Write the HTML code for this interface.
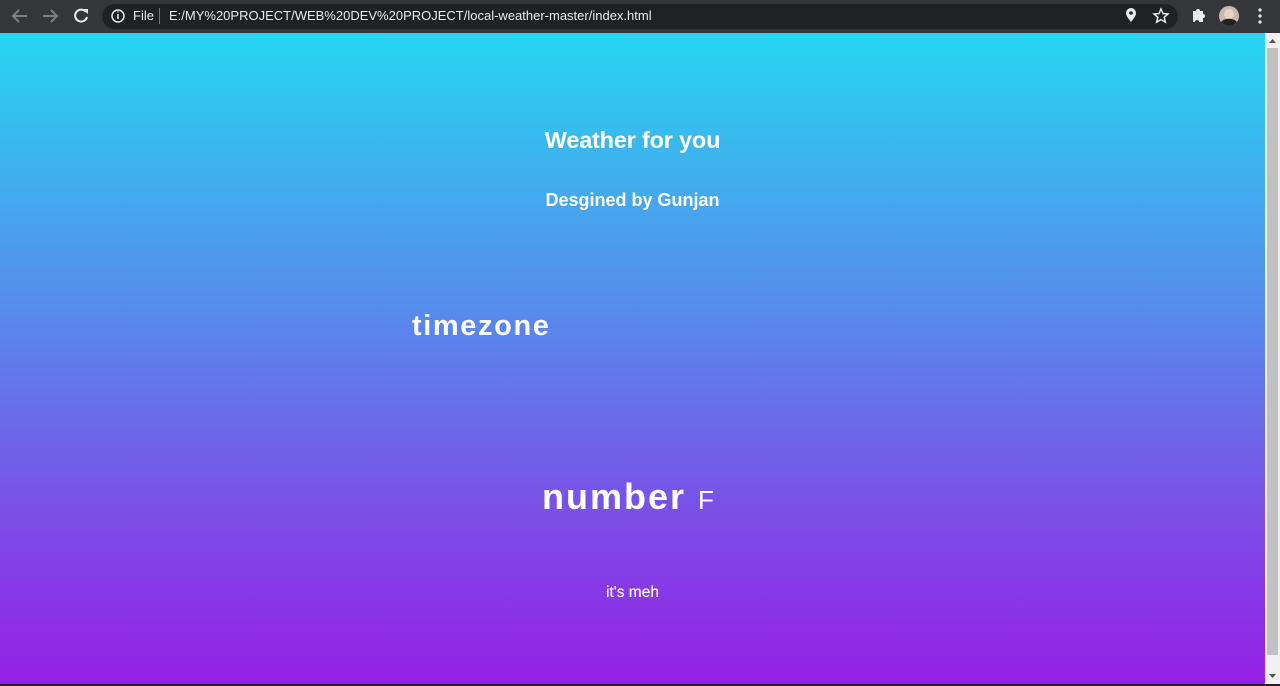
<!DOCTYPE html>
<html><head><meta charset="utf-8"><style>
*{margin:0;padding:0;box-sizing:border-box}
body{width:1280px;height:686px;overflow:hidden;font-family:"Liberation Sans",sans-serif;background:#35363a;position:relative}
.bar{position:absolute;left:0;top:0;width:1280px;height:33px;background:#35363a}
.addr{position:absolute;left:102px;top:4px;width:1076px;height:25px;background:#202124;border-radius:13px}
.url{position:absolute;left:169px;top:8px;color:#e8eaed;font-size:13px}
.file{position:absolute;left:133px;top:8px;color:#e8eaed;font-size:13px}
.sep{position:absolute;left:159px;top:8px;width:1px;height:16px;background:#777}
.page{position:absolute;left:0;top:33px;width:1265px;height:651px;background:linear-gradient(#26d6f0,#5a86ec 45%,#7c4ce6 75%,#961fe6);color:#fff;font-weight:bold}
.sb{position:absolute;left:1265px;top:33px;width:15px;height:651px;background:#f1f1f1}
.thumb{position:absolute;left:2px;top:15px;width:11px;height:607px;background:#c1c1c1}
.bot{position:absolute;left:0;top:684px;width:1280px;height:2px;background:#202124}
.t{position:absolute;white-space:nowrap}
</style></head><body>
<div class="bar">
<svg width="1280" height="33" style="position:absolute;left:0;top:0">
<g stroke="#7d7f82" stroke-width="2" fill="none"><path d="M27 16H13M19 10l-6 6 6 6"/><path d="M43 16h14M51 10l6 6-6 6"/></g>
<path d="M86 12a6 6 0 1 0 1 5" stroke="#e8eaed" stroke-width="2" fill="none"/><path d="M82 9h6v5z" fill="#e8eaed"/>
</svg>
<div class="addr"></div>
<svg width="1280" height="33" style="position:absolute;left:0;top:0">
<circle cx="118" cy="16" r="6" stroke="#e8eaed" stroke-width="1.5" fill="none"/><path d="M118 14v5M118 11.5v1" stroke="#e8eaed" stroke-width="1.5"/>
<path d="M1131 22c-4-5-5-7-5-9a5 5 0 0 1 10 0c0 2-1 4-5 9z" fill="#e8eaed"/><circle cx="1131" cy="13" r="1.8" fill="#202124"/>
<path d="M1161 9l2 4.5 5 .5-3.8 3.3 1.2 4.9-4.4-2.6-4.4 2.6 1.2-4.9-3.8-3.3 5-.5z" stroke="#e8eaed" stroke-width="1.5" fill="none"/>
<path d="M1193 11h3a2 2 0 0 1 4 0h3v3a2 2 0 0 1 0 4v4h-4a2 2 0 0 0-4 0h-2z" fill="#e8eaed"/>
<circle cx="1229" cy="16" r="10" fill="#ccb9ad"/><circle cx="1229" cy="14" r="5" fill="#e8d2c4"/><path d="M1221 22a9 6 0 0 1 16 0 10 10 0 0 1-16 0z" fill="#222"/>
<g fill="#e8eaed"><circle cx="1260" cy="10" r="1.6"/><circle cx="1260" cy="16" r="1.6"/><circle cx="1260" cy="22" r="1.6"/></g>
</svg>
<div class="file">File</div><div class="sep"></div>
<div class="url">E:/MY%20PROJECT/WEB%20DEV%20PROJECT/local-weather-master/index.html</div>
</div>
<div class="page">
<div class="t" style="left:0;width:1265px;text-align:center;top:94px;font-size:23.5px;letter-spacing:-0.2px">Weather for you</div>
<div class="t" style="left:0;width:1265px;text-align:center;top:157px;font-size:18px;letter-spacing:0px">Desgined by Gunjan</div>
<div class="t" style="left:412px;top:277px;font-size:29px;letter-spacing:1.6px">timezone</div>
<div class="t" style="left:542px;top:443px;font-size:36px;letter-spacing:2px">number <span style="font-weight:normal;font-size:26px;letter-spacing:0">F</span></div>
<div class="t" style="left:0;width:1265px;text-align:center;top:551px;font-size:15.5px;font-weight:normal;text-shadow:0 0 0.4px #fff">it's meh</div>
</div>
<div class="sb"><div class="thumb"></div>
<svg width="15" height="651" style="position:absolute;left:0;top:0"><path d="M4 10l3.5-4 3.5 4z" fill="#505050"/><path d="M4 641l3.5 4 3.5-4z" fill="#505050"/></svg></div>
<div class="bot"></div>
</body></html>
